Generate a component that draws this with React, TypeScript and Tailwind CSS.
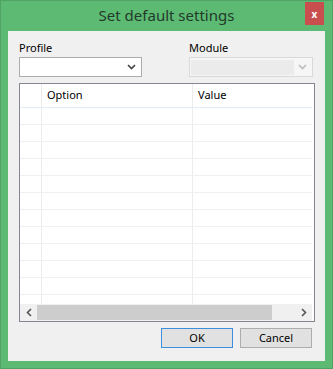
const font = { fontFamily: '"Noto Sans", "Segoe UI", sans-serif' };

function Chevron({ color }: { color: string }) {
  return (
    <svg width="9" height="6" viewBox="0 0 9 6">
      <polyline points="1,1 4.5,4.5 8,1" fill="none" stroke={color} strokeWidth="1.6" />
    </svg>
  );
}

function Arrow({ dir }: { dir: "left" | "right" }) {
  return (
    <svg width="6" height="9" viewBox="0 0 6 9">
      <polyline
        points={dir === "left" ? "5,1 1.5,4.5 5,8" : "1,1 4.5,4.5 1,8"}
        fill="none"
        stroke="#555"
        strokeWidth="1.6"
      />
    </svg>
  );
}

function GridRow({ h }: { h: string }) {
  return (
    <div className={`flex w-[292px] ${h} border-b border-[#f0f0f0]`}>
      <div className="w-[22px] border-r border-[#ececec]" />
      <div className="w-[151px] border-r border-[#ececec]" />
      <div className="flex-1" />
    </div>
  );
}

export default function App() {
  return (
    <div
      className="w-[333px] h-[369px] bg-[#5cba73] border border-[#4fa465] flex flex-col text-[11px] text-black"
      style={font}
    >
      {/* title bar */}
      <div className="relative h-[30px] flex items-center justify-center">
        <span className="text-[15px] text-[#223a2b] pb-[1px]">Set default settings</span>
        <div className="absolute right-[8px] top-[1px] w-[19px] h-[23px] bg-[#c94f4f] flex items-center justify-center">
          <span className="text-white text-[10px] font-bold leading-none">x</span>
        </div>
      </div>

      {/* client */}
      <div className="mx-[7px] mb-[7px] flex-1 bg-[#f0f0f0] flex flex-col pl-[11px] pr-[10px] pt-[10px]">
        <div className="flex">
          <div className="w-[123px] flex flex-col">
            <div className="h-[16px] leading-[14px]">Profile</div>
            <div className="h-[20px] bg-white border border-[#acacac] flex items-center justify-end pr-[5px]">
              <Chevron color="#444" />
            </div>
          </div>
          <div className="ml-[47px] w-[124px] flex flex-col">
            <div className="h-[16px] leading-[14px]">Module</div>
            <div className="h-[20px] bg-[#f6f6f6] border border-[#d9d9d9] flex items-center pl-[1px] pr-[5px]">
              <div className="w-[103px] h-[15px] bg-[#ebebeb]" />
              <div className="flex-1" />
              <Chevron color="#bdbdbd" />
            </div>
          </div>
        </div>

        {/* grid */}
        <div className="mt-[6px] h-[239px] bg-white border border-[#828790] flex flex-col">
          <div className="flex w-[292px] h-[24px] border-b border-[#e3ebf5]">
            <div className="w-[22px] border-r border-[#ececec]" />
            <div className="w-[151px] border-r border-[#ececec] flex items-center pl-[5px]">Option</div>
            <div className="flex-1 flex items-center pl-[5px]">Value</div>
          </div>
          <div className="flex-1 flex flex-col overflow-hidden">
            {Array.from({ length: 12 }).map((_, i) => (
              <GridRow key={i} h="h-[17px] shrink-0" />
            ))}
          </div>
          <div className="h-[17px] w-[292px] bg-[#f0f0f0] flex items-center">
            <div className="w-[17px] flex justify-center">
              <Arrow dir="left" />
            </div>
            <div className="w-[235px] h-[15px] bg-[#cdcdcd]" />
            <div className="flex-1" />
            <div className="w-[17px] flex justify-center">
              <Arrow dir="right" />
            </div>
          </div>
        </div>

        {/* buttons */}
        <div className="mt-[6px] flex justify-end gap-[7px] pr-[3px]">
          <button className="w-[72px] h-[20px] bg-[#e1e1e1] border border-[#3c8fdc] flex items-center justify-center">
            OK
          </button>
          <button className="w-[72px] h-[20px] bg-[#e1e1e1] border border-[#adadad] flex items-center justify-center">
            Cancel
          </button>
        </div>
      </div>
    </div>
  );
}
